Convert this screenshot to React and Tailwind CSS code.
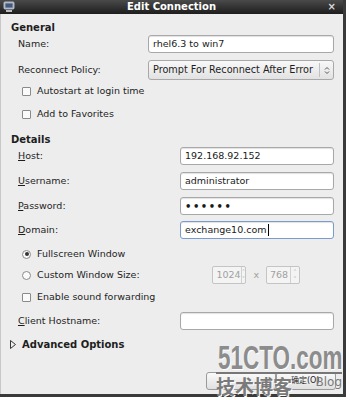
import React from "react";

const font = { fontFamily: '"DejaVu Sans", "Noto Sans CJK SC", sans-serif' };

function Field({ value, focus, className = "" }) {
  return (
    <div className={`h-[18px] w-[154px] bg-white rounded-[3px] border ${focus ? "border-[#7a9ccc]" : "border-[#a8a8a8]"} flex items-center px-[4px] text-[9.5px] text-[#1a1a1a] shadow-[inset_0_1px_1px_rgba(0,0,0,0.12)] ${className}`}>
      {value}
      {focus && <span className="w-px h-[12px] bg-black ml-px" />}
    </div>
  );
}

function Check({ label }) {
  return (
    <div className="h-[14px] flex items-center pl-[20px] gap-[6px]">
      <span className="w-[9px] h-[9px] border border-[#8a8a8a] bg-[#fafafa] rounded-[1px]" />
      <span>{label}</span>
    </div>
  );
}

function Radio({ label, checked }) {
  return (
    <span className="flex items-center gap-[6px]">
      <span className="w-[9px] h-[9px] rounded-full border border-[#8a8a8a] bg-[#fafafa] flex items-center justify-center">
        {checked && <span className="w-[4px] h-[4px] rounded-full bg-[#333]" />}
      </span>
      <span>{label}</span>
    </span>
  );
}

function Spin({ value }) {
  return (
    <div className="h-[18px] w-[34px] bg-[#f4f4f4] border border-[#c4c4c4] rounded-[2px] flex items-center text-[9.5px] text-[#a0a0a0]">
      <span className="flex-1 pl-[3px]">{value}</span>
      <span className="w-[9px] h-full border-l border-[#d0d0d0] flex flex-col items-center justify-center text-[6px] leading-[7px] text-[#aaa]">
        <span>˄</span>
        <span>˅</span>
      </span>
    </div>
  );
}

function Label({ u, rest }) {
  return (
    <span className="pl-[16px]">
      <u className="underline-offset-[1px]">{u}</u>
      {rest}
    </span>
  );
}

export default function App() {
  return (
    <div style={font} className="w-[350px] h-[400px] bg-white text-[9.5px] text-[#1e1e1e] overflow-hidden">
      <div className="w-[346px] h-[397px] bg-[#ededed] border-r-[3px] border-b-[3px] border-[#3a3a3a] flex flex-col relative">
        {/* title bar */}
        <div className="h-[14px] bg-gradient-to-b from-[#4a4a4a] to-[#1e1e1e] flex items-center relative">
          <svg width="12" height="12" viewBox="0 0 12 12" className="ml-[3px]">
            <rect x="1" y="1" width="10" height="7" rx="1" fill="#9aa8c0" stroke="#d0d6e0" strokeWidth="0.8" />
            <rect x="2.5" y="2.5" width="7" height="4" fill="#46587a" />
            <rect x="3" y="9" width="6" height="2" fill="#b8bcc4" />
          </svg>
          <span className="absolute left-0 right-0 text-center text-white font-bold text-[10px] leading-[14px]">Edit Connection</span>
          <span className="absolute right-[7px] text-[#d8d8d8] font-bold text-[10px] leading-[14px]">×</span>
        </div>

        <div className="flex flex-col pt-[6px] pl-[1px] pr-[9px] flex-1 border-l border-[#c8c8c8]">
          <div className="h-[14px] flex items-center pl-[9px] font-bold text-[10px]">General</div>

          <div className="mt-[1px] h-[18px] flex items-center justify-between">
            <span className="pl-[16px]">Name:</span>
            <Field value="rhel6.3 to win7" className="w-[186px]" />
          </div>

          <div className="mt-[7px] h-[20px] flex items-center justify-between">
            <span className="pl-[16px]">Reconnect Policy:</span>
            <div className="h-[20px] w-[186px] rounded-[3px] border border-[#a8a8a8] bg-gradient-to-b from-[#f8f8f8] to-[#e2e2e2] flex items-center">
              <span className="flex-1 pl-[4px] whitespace-nowrap text-[9.7px]">Prompt For Reconnect After Error</span>
              <span className="w-[14px] h-[14px] border-l border-[#c0c0c0] flex items-center justify-center">
                <svg width="6" height="9" viewBox="0 0 6 9">
                  <path d="M1 3.5 L3 1.5 L5 3.5 M1 5.5 L3 7.5 L5 5.5" fill="none" stroke="#555" strokeWidth="1" />
                </svg>
              </span>
            </div>
          </div>

          <div className="mt-[4px]"><Check label="Autostart at login time" /></div>
          <div className="mt-[9px]"><Check label="Add to Favorites" /></div>

          <div className="mt-[11px] h-[14px] flex items-center pl-[9px] font-bold text-[10px]">Details</div>

          <div className="mt-[1px] h-[18px] flex items-center justify-between">
            <Label u="H" rest="ost:" />
            <Field value="192.168.92.152" />
          </div>
          <div className="mt-[7px] h-[18px] flex items-center justify-between">
            <Label u="U" rest="sername:" />
            <Field value="administrator" />
          </div>
          <div className="mt-[7px] h-[18px] flex items-center justify-between">
            <Label u="P" rest="assword:" />
            <Field value={<span className="tracking-[1.5px] text-[10px] font-bold">••••••</span>} />
          </div>
          <div className="mt-[6px] h-[18px] flex items-center justify-between">
            <Label u="D" rest="omain:" />
            <Field value="exchange10.com" focus />
          </div>

          <div className="mt-[8px] h-[14px] flex items-center pl-[20px]">
            <Radio label="Fullscreen Window" checked />
          </div>
          <div className="mt-[5px] h-[18px] flex items-center pl-[20px]">
            <Radio label="Custom Window Size:" />
            <div className="ml-auto mr-[34px] flex items-center gap-[7px] text-[#a0a0a0]">
              <Spin value="1024" />
              <span>x</span>
              <Spin value="768" />
            </div>
          </div>
          <div className="mt-[6px]"><Check label="Enable sound forwarding" /></div>

          <div className="mt-[8px] h-[18px] flex items-center justify-between">
            <Label u="C" rest="lient Hostname:" />
            <Field value="" />
          </div>

          <div className="mt-[7px] h-[14px] flex items-center pl-[8px] gap-[6px] font-bold text-[10px]">
            <svg width="6" height="9" viewBox="0 0 6 9">
              <path d="M0.5 0.5 L5.5 4.5 L0.5 8.5 Z" fill="none" stroke="#222" strokeWidth="0.9" />
            </svg>
            <span>Advanced Options</span>
          </div>

          <div className="mt-auto mb-[4px] flex justify-end">
            <button className="h-[18px] w-[70px] rounded-[3px] border border-[#9a9a9a] bg-gradient-to-b from-[#fafafa] to-[#e0e0e0]" />
            <button className="h-[18px] w-[60px] rounded-[3px] border border-[#9a9a9a] bg-gradient-to-b from-[#fafafa] to-[#e0e0e0] text-[8px] -mr-[2px] pl-[14px] text-left">确定(O)</button>
          </div>
        </div>

        {/* watermark */}
        <div className="absolute left-[216px] top-[343px] w-[126px] pointer-events-none flex flex-col items-end">
          <span className="text-[34px] leading-[28px] font-bold text-[#8c8c8c] scale-x-[0.66] origin-right whitespace-nowrap [text-shadow:1px_1px_0_#fff]" style={{ fontFamily: '"Liberation Sans", sans-serif' }}>51CTO.com</span>
          <span className="w-full h-[2px] bg-[#777] mt-[1px]" />
          <span className="flex items-end w-full">
            <span className="text-[19px] leading-[22px] text-[#7a7a7a] font-bold [text-shadow:1px_1px_0_#fff]" style={{ fontFamily: '"Noto Sans CJK SC", sans-serif' }}>技术博客</span>
            <span className="ml-auto text-[12px] leading-[16px] text-[#7a7a7a] mb-[7px]">Blog</span>
          </span>
        </div>
      </div>
    </div>
  );
}
